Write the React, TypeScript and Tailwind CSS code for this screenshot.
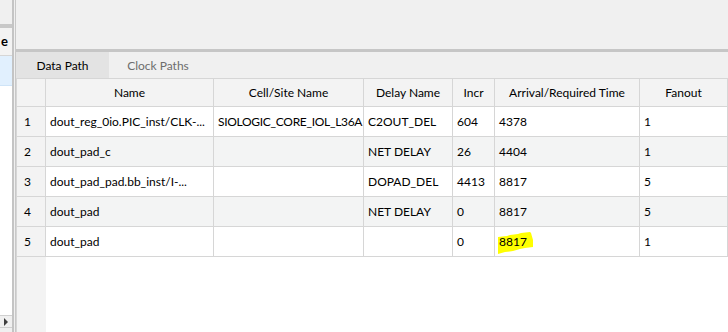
import React from 'react';

type Row = {
  name: string;
  cell: string;
  delay: string;
  incr: string;
  arrival: string;
  fanout: string;
};

const rows: Row[] = [
  { name: 'dout_reg_0io.PIC_inst/CLK-...', cell: 'SIOLOGIC_CORE_IOL_L36A', delay: 'C2OUT_DEL', incr: '604', arrival: '4378', fanout: '1' },
  { name: 'dout_pad_c', cell: '', delay: 'NET DELAY', incr: '26', arrival: '4404', fanout: '1' },
  { name: 'dout_pad_pad.bb_inst/I-...', cell: '', delay: 'DOPAD_DEL', incr: '4413', arrival: '8817', fanout: '5' },
  { name: 'dout_pad', cell: '', delay: 'NET DELAY', incr: '0', arrival: '8817', fanout: '5' },
  { name: 'dout_pad', cell: '', delay: '', incr: '0', arrival: '8817', fanout: '1' },
];

const cellBase = 'box-border flex items-center border-r border-b border-[#d6d6d6] px-[4px] whitespace-nowrap overflow-hidden';

// yellow marker stroke drawn over the last arrival time
const Highlight: React.FC = () => (
  <svg className="absolute left-0 top-0 pointer-events-none" width="60" height="29" viewBox="0 0 60 29">
    <polygon
      points="3,10 12,9 15,8 23,7 26,6 35,5 36,6 38,13 38,20 30,21 25,22 18,24 10,25 3,27"
      fill="#ffff00"
    />
  </svg>
);

const App: React.FC = () => {
  return (
    <div
      className="w-[728px] h-[332px] flex bg-white text-black overflow-hidden"
      style={{ fontFamily: 'Lato, "Noto Sans", sans-serif' }}
    >
      {/* left panel (cut off) */}
      <div className="w-[12px] flex flex-col shrink-0">
        <div className="h-[24px] bg-[#f0f0f0]" />
        <div className="h-[4px] bg-[#c8c8c8]" />
        <div className="h-[28px] bg-[#f3f3f3] border-b border-[#d6d6d6] flex items-center justify-end pr-[4px] text-[13px] font-bold">
          e
        </div>
        <div className="h-[30px] bg-[#e1f0fe] border-b border-[#cfe4f7]" />
        <div className="flex-1 bg-white" />
        <div className="h-[13px] bg-[#f0f0f0] border-y border-[#d0d0d0] flex items-center pl-[4px]">
          <span className="block w-0 h-0 border-y-[4px] border-y-transparent border-l-[4px] border-l-[#404040]" />
        </div>
        <div className="h-[4px] bg-[#f0f0f0]" />
      </div>

      {/* splitter */}
      <div className="w-[4px] shrink-0 flex">
        <div className="w-[2px] bg-[#c4c4c4]" />
        <div className="w-[1px] bg-[#f0f0f0]" />
        <div className="w-[1px] bg-[#c8c8c8]" />
      </div>

      {/* right panel */}
      <div className="flex-1 flex flex-col min-w-0">
        <div className="h-[49px] bg-[#f0f0f0]" />
        <div className="h-[3px] bg-[#c6c6c6]" />
        <div className="h-[26px] bg-[#f0f0f0] flex text-[12px]">
          <div className="w-[93px] bg-[#e3e3e3] flex items-center justify-center pt-[1px]">Data Path</div>
          <div className="w-[98px] flex items-center justify-center text-[#6d6d6d] pt-[1px]">Clock Paths</div>
        </div>

        <div className="flex-1 flex flex-col border-l border-t border-[#d6d6d6] text-[12px] bg-white">
          <div className="flex h-[28px] bg-[#f3f3f3]">
            <div className={`${cellBase} w-[29px]`} />
            <div className={`${cellBase} w-[168px] justify-center`}>Name</div>
            <div className={`${cellBase} w-[150px] justify-center`}>Cell/Site Name</div>
            <div className={`${cellBase} w-[89px] justify-center`}>Delay Name</div>
            <div className={`${cellBase} w-[42px] justify-center`}>Incr</div>
            <div className={`${cellBase} w-[145px] justify-center`}>Arrival/Required Time</div>
            <div className={`${cellBase} w-[88px] justify-center`}>Fanout</div>
          </div>

          {rows.map((r, i) => {
            const bg = i % 2 === 1 ? 'bg-[#f3f4f4]' : 'bg-white';
            const last = i === rows.length - 1;
            return (
              <div key={i} className={`flex h-[30px] ${bg}`}>
                <div className={`${cellBase} w-[29px] bg-[#f3f3f3] pl-[7px]`}>{i + 1}</div>
                <div className={`${cellBase} w-[168px]`}>{r.name}</div>
                <div className={`${cellBase} w-[150px] tracking-[-0.3px]`}>{r.cell}</div>
                <div className={`${cellBase} w-[89px]`}>{r.delay}</div>
                <div className={`${cellBase} w-[42px]`}>{r.incr}</div>
                <div className={`${cellBase} w-[145px] relative`}>
                  {last && <Highlight />}
                  <span className="relative">{r.arrival}</span>
                </div>
                <div className={`${cellBase} w-[88px]`}>{r.fanout}</div>
              </div>
            );
          })}

          <div className="flex-1 flex">
            <div className="w-[29px] bg-[#f3f3f3]" />
          </div>
        </div>
      </div>
    </div>
  );
};

export default App;
